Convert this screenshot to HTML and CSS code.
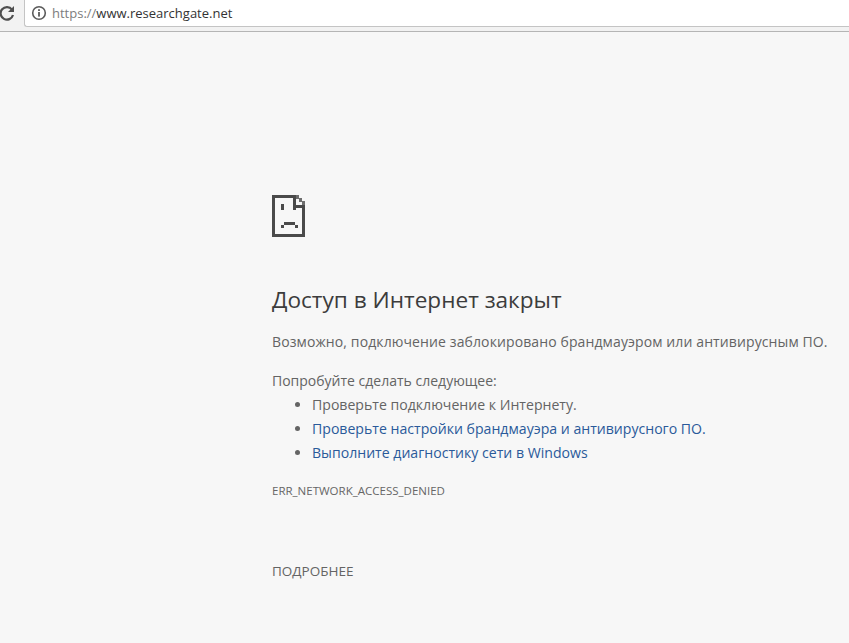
FILE: index.html
```html
<!DOCTYPE html>
<html lang="ru">
<head>
    <meta charset="UTF-8">
    <title>Доступ в Интернет закрыт</title>
    <link rel="stylesheet" href="styles.css">
</head>
<body>
    <div class="toolbar">
        <svg class="reload" width="16" height="16" viewBox="0 0 16 16">
            <path d="M13 4.6A6.3 6.3 0 1 0 14 10" fill="none" stroke="#4f4f4f" stroke-width="2.2"/>
            <path d="M15 1v6H9z" fill="#4f4f4f"/>
        </svg>
        <div class="omnibox">
            <svg class="info" width="16" height="16" viewBox="0 0 16 16">
                <circle cx="8" cy="8" r="6.3" fill="none" stroke="#5a5a5a" stroke-width="1.6"/>
                <rect x="7.1" y="7" width="1.8" height="4.6" fill="#5a5a5a"/>
                <rect x="7.1" y="4.2" width="1.8" height="1.8" fill="#5a5a5a"/>
            </svg>
            <span class="scheme">https://</span><span class="host">www.researchgate.net</span>
        </div>
    </div>

    <div class="content">
        <svg class="sad-icon" width="33" height="42" viewBox="0 0 33 42" shape-rendering="crispEdges">
            <path d="M0 0h24v3H3v36h27V13h3v29H0z" fill="#4a4a4a"/>
            <path d="M21 0h3v10h9v3H21z" fill="#4a4a4a"/>
            <path d="M24 0h3v3h3v3h3v4h-3V7h-3V4h-3z" fill="#6e6e6e"/>
            <rect x="21" y="13" width="3" height="2" fill="#4a4a4a"/>
            <rect x="9" y="9" width="3" height="6" fill="#4a4a4a"/>
            <rect x="12" y="27" width="11" height="3" fill="#4a4a4a"/>
            <rect x="9" y="30" width="3" height="3" fill="#4a4a4a"/>
            <rect x="23" y="30" width="3" height="3" fill="#4a4a4a"/>
        </svg>
        <h1 class="title">Доступ в Интернет закрыт</h1>
        <p class="summary">Возможно, подключение заблокировано брандмауэром или антивирусным ПО.</p>
        <p class="try">Попробуйте сделать следующее:</p>
        <ul class="tips">
            <li>Проверьте подключение к Интернету.</li>
            <li><a href="#">Проверьте настройки брандмауэра и антивирусного ПО.</a></li>
            <li><a href="#">Выполните диагностику сети в Windows</a></li>
        </ul>
        <div class="code">ERR_NETWORK_ACCESS_DENIED</div>
        <div class="details">ПОДРОБНЕЕ</div>
    </div>
</body>
</html>
```

FILE: styles.css
```css
html, body {
    margin: 0;
    height: 100%;
    overflow: hidden;
}
body {
    background-color: #f7f7f7;
    font-family: "Open Sans", "Noto Sans", sans-serif;
    color: #646464;
}
.toolbar {
    display: flex;
    align-items: flex-start;
    height: 32px;
    box-sizing: border-box;
    background-color: #f2f2f2;
    border-bottom: 1px solid #b5b5b5;
}
.reload {
    margin: 5px 9px 0 -1px;
    flex: none;
}
.omnibox {
    flex: 1;
    display: flex;
    align-items: center;
    height: 27px;
    box-sizing: border-box;
    background-color: #fff;
    border: 1px solid #c4c4c4;
    border-top: none;
    border-right: none;
    border-radius: 0 0 0 3px;
    padding-left: 6px;
    font-size: 13px;
}
.info {
    margin-right: 5px;
}
.scheme {
    color: #7d7d7d;
}
.host {
    color: #333;
}
.content {
    padding: 163px 0 0 272px;
}
.sad-icon {
    display: block;
}
.title {
    margin: 48px 0 0;
    font-size: 22.6px;
    font-weight: 400;
    line-height: 30px;
    color: #3c3c3c;
}
.summary {
    margin: 15px 0 0;
    font-size: 14px;
    letter-spacing: 0.11px;
    line-height: 24px;
    white-space: nowrap;
}
.try {
    margin: 15px 0 0;
    font-size: 14px;
    line-height: 24px;
}
.tips {
    margin: 0;
    padding-left: 40px;
    font-size: 14.1px;
    line-height: 24px;
}
.tips a {
    color: #2a5a9a;
    text-decoration: none;
}
.code {
    margin-top: 16px;
    font-size: 11.5px;
    line-height: 20px;
    color: #666;
}
.details {
    margin-top: 60px;
    font-size: 13.5px;
    line-height: 20px;
}
```
